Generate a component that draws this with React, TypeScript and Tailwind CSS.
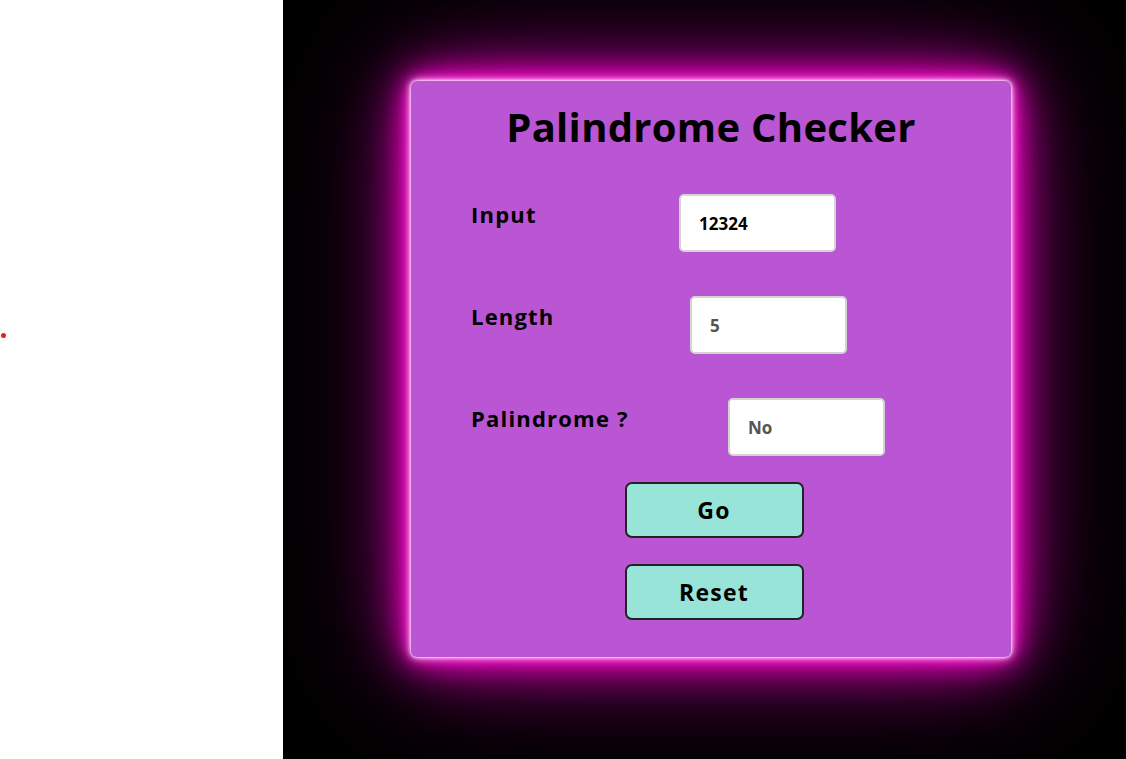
import React, { useState } from "react";

const font = { fontFamily: '"Open Sans", "Noto Sans", sans-serif' };

const Row = ({ label, value, labelW, dark }: { label: string; value: string; labelW: string; dark?: boolean }) => (
  <div className="flex items-start">
    <span className={`${labelW} pt-[6px] text-[22px] font-bold leading-[28px] tracking-[1.2px] text-black`}>{label}</span>
    <input
      readOnly
      value={value}
      className={`h-[58px] w-[157px] rounded-[5px] border-2 border-[#d4d4d4] bg-white px-[18px] text-[17px] font-bold outline-none ${dark ? "text-black" : "text-[#555]"}`}
      style={font}
    />
  </div>
);

export default function App() {
  const [input] = useState("12324");

  return (
    <div className="flex h-[759px] w-full bg-white" style={font}>
      <div className="flex w-[283px] flex-col">
        <div className="mt-[333px] ml-[1px] h-[5px] w-[5px] rounded-full bg-[#e0202a]" />
      </div>

      <div className="flex-1 overflow-hidden bg-black">
        <div className="mt-[81px] ml-[128px] flex h-[576px] w-[600px] flex-col rounded-[6px] bg-[#ba55d3] shadow-[0_0_3px_#fff,0_0_7px_#fff,0_0_14px_#ff50e8,0_0_26px_#ff00d4,0_0_44px_#ff00c4,0_0_80px_#b0009c,0_0_140px_#60004e]">
          <h1 className="pt-[22px] text-center text-[40px] font-bold leading-[48px] tracking-[0.3px] text-black">Palindrome Checker</h1>

          <div className="mt-[43px] flex flex-col gap-[44px] pl-[60px]">
            <Row label="Input" value={input} labelW="w-[208px]" dark />
            <Row label="Length" value="5" labelW="w-[219px]" />
            <Row label="Palindrome ?" value="No" labelW="w-[257px]" />
          </div>

          <div className="mt-[26px] flex flex-col items-center gap-[26px] pl-[6px]">
            <button className="h-[56px] w-[179px] rounded-[7px] border-2 border-[#222] bg-[#98e4d9] text-[23px] font-bold tracking-[1.2px] text-black">Go</button>
            <button className="h-[56px] w-[179px] rounded-[7px] border-2 border-[#222] bg-[#98e4d9] text-[23px] font-bold tracking-[1.2px] text-black">Reset</button>
          </div>
        </div>
      </div>
    </div>
  );
}
